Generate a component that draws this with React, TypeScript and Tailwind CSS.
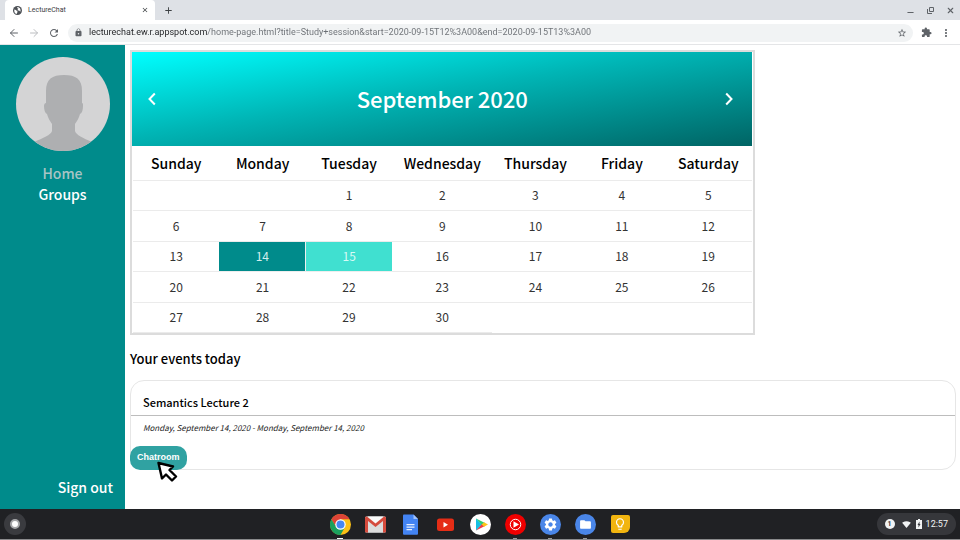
import type { ReactNode } from "react";
import { ArrowLeft, ArrowRight, Minus, X } from "lucide-react";
import {
  MdClose,
  MdAdd,
  MdRefresh,
  MdLock,
  MdStarBorder,
  MdExtension,
  MdMoreVert,
  MdSettings,
  MdFolder,
  MdSignalWifi4Bar,
  MdLightbulbOutline,
} from "react-icons/md";

const SANS = "font-['Noto_Sans_CJK_JP','Noto_Sans',sans-serif]";
const UI = "font-[Roboto,sans-serif]";

const DAYS = ["Sunday", "Monday", "Tuesday", "Wednesday", "Thursday", "Friday", "Saturday"];
const WEEKS: (number | null)[][] = [
  [null, null, 1, 2, 3, 4, 5],
  [6, 7, 8, 9, 10, 11, 12],
  [13, 14, 15, 16, 17, 18, 19],
  [20, 21, 22, 23, 24, 25, 26],
  [27, 28, 29, 30, null, null, null],
];

function TabStrip() {
  return (
    <div className="flex h-5 items-stretch bg-[#dee1e6] pl-[5px] text-[#3c4043]">
      <div className="flex w-[150px] items-center rounded-t-[4px] bg-white pr-[6px] pl-2">
        <svg viewBox="0 0 20 20" className="size-[9px]">
          <circle cx="10" cy="10" r="10" fill="#4d5156" />
          <path
            d="M3 8c3 0 4 2 6 3s1 3 0 4 0 3-1 3C4 17 2 13 3 8zM9 3c3-1 5 0 7 3 1 3 1 5 0 7-1-2-2-3-4-3s-3-2-1-3 0-2-2-2z"
            fill="#fff"
          />
        </svg>
        <span className="ml-[6px] flex-1 text-[7px] leading-none">LectureChat</span>
        <button aria-label="Close tab">
          <MdClose className="size-2" />
        </button>
      </div>
      <button aria-label="New tab" className="ml-2">
        <MdAdd className="size-[11px]" />
      </button>
      <div className="ml-auto flex items-center gap-[11px] pr-[5px] text-[#5f6368]">
        <button aria-label="Minimize" className="pt-[5px]">
          <Minus className="size-[9px]" strokeWidth={3} />
        </button>
        <button aria-label="Restore">
          <svg viewBox="0 0 9 9" className="size-[9px]" fill="none" stroke="currentColor">
            <path d="M3.5 1.5h4v4h-4zM1.5 3v4.5H6" />
          </svg>
        </button>
        <button aria-label="Close window">
          <X className="size-[9px]" strokeWidth={3} />
        </button>
      </div>
    </div>
  );
}

function Toolbar() {
  return (
    <div className="flex h-[25px] items-center border-b border-[#e4e5e7] bg-white pt-px pr-2 pl-2 text-[#5f6368]">
      <button aria-label="Back" className="mr-2">
        <ArrowLeft className="size-3" strokeWidth={2} />
      </button>
      <button aria-label="Forward" className="mr-2 text-[#bcbec1]">
        <ArrowRight className="size-3" strokeWidth={2} />
      </button>
      <button aria-label="Reload" className="mr-2">
        <MdRefresh className="size-3" />
      </button>
      <div className="flex h-[18px] flex-1 items-center rounded-full bg-[#f1f3f4] pr-[6px] pl-[6px]">
        <MdLock className="size-[9px]" />
        <input
          aria-label="Address"
          className="ml-[6px] flex-1 bg-[linear-gradient(90deg,#202124_118px,#6b6f74_118px)] bg-clip-text text-[9px] text-transparent outline-none"
          defaultValue="lecturechat.ew.r.appspot.com/home-page.html?title=Study+session&start=2020-09-15T12%3A00&end=2020-09-15T13%3A00"
        />
        <button aria-label="Bookmark">
          <MdStarBorder className="size-[10px]" />
        </button>
      </div>
      <button aria-label="Extensions" className="ml-2">
        <MdExtension className="size-[11px]" />
      </button>
      <button aria-label="Menu" className="ml-2">
        <MdMoreVert className="size-3" />
      </button>
    </div>
  );
}

function Avatar() {
  return (
    <svg viewBox="0 0 94 94" className="size-[94px] shrink-0 self-center" role="img" aria-label="Profile picture">
      <clipPath id="round">
        <circle cx="47" cy="47" r="47" />
      </clipPath>
      <g clipPath="url(#round)">
        <rect width="94" height="94" fill="#d4d4d5" />
        <path
          d="M30 42V34c0-12 6-16 18-16s18 4 18 16v12c1 0 1 1 1 3 0 4-1 7-3 8-1 4-3 7-5 10v7c1 4 8 7 17 11v12H18V85c9-4 17-7 18-11v-7c-2-3-4-6-5-10-2-1-3-4-3-8 0-2 1-3 2-3z"
          fill="#aeafb1"
        />
      </g>
    </svg>
  );
}

function Sidebar() {
  return (
    <nav className="flex w-[125px] shrink-0 flex-col bg-[#008b8b] px-3 pt-3 pb-[11px] text-sm leading-[21px] font-medium text-white">
      <Avatar />
      <div className="mt-3 flex flex-col items-center">
        <a href="#home" className="text-[#a9c4c4]">Home</a>
        <a href="#groups">Groups</a>
      </div>
      <a href="#sign-out" className="mt-auto self-end">Sign out</a>
    </nav>
  );
}

function dayClass(day: number | null, lastWeek: boolean) {
  if (day === 14) return "border-b border-[#eee] bg-[#008b8b] text-[#d5eeee]";
  if (day === 15) return "border-b border-l border-[#eee] bg-[#40e0d0] text-[#d8faf6]";
  if (lastWeek && day === null) return "";
  return "border-b border-[#ebebeb]";
}

function Chevron({ d }: { d: string }) {
  return (
    <svg viewBox="0 0 8 14" className="h-[14px] w-2" fill="none" stroke="currentColor" strokeWidth="2">
      <path d={d} />
    </svg>
  );
}

function Calendar() {
  return (
    <section className="box-content w-3/4 border-2 border-[#dcdcdc] pr-px">
      <header className="flex h-[94px] items-center justify-between bg-[linear-gradient(to_bottom_right,#00ffff,#00b5b5_45%,#006464)] pr-[19px] pl-4 text-white">
        <button aria-label="Previous month">
          <Chevron d="M6.800 1.500 1.500 7l5.300 5.500" />
        </button>
        <h1 className="pb-[3px] pl-1 text-[22px] leading-8 font-medium">September 2020</h1>
        <button aria-label="Next month">
          <Chevron d="M1.200 1.500 6.500 7l-5.300 5.500" />
        </button>
      </header>
      <div className="pl-px">
        <table className="h-[187px] w-full table-fixed border-collapse text-center text-[#333]">
          <thead>
            <tr className="h-[34px] text-black">
              {DAYS.map((d) => (
                <th
                  key={d}
                  className={
                    "border-b border-[#ebebeb] p-0 text-sm leading-5 font-medium " +
                    (d === "Wednesday" ? "w-[100px]" : "")
                  }
                >
                  {d}
                </th>
              ))}
            </tr>
          </thead>
          <tbody>
            {WEEKS.map((week, i) => (
              <tr key={i} className="h-[30px]">
                {week.map((day, j) => (
                  <td key={j} className={"p-0 text-xs leading-5 " + dayClass(day, i === WEEKS.length - 1)}>
                    {day}
                  </td>
                ))}
              </tr>
            ))}
          </tbody>
        </table>
      </div>
    </section>
  );
}

function Pointer() {
  return (
    <svg viewBox="0 0 22 22" className="pointer-events-none absolute top-[14px] left-[26px] size-[22px]">
      <path
        d="M2.500 3 17 6.500 13.500 10 20 16.500 16 20.500 10 14.500 6 18.500z"
        fill="#fff"
        stroke="#000"
        strokeWidth="2.400"
        strokeLinejoin="round"
      />
    </svg>
  );
}

function EventCard() {
  return (
    <article className="rounded-[14px] border border-[#e6e6e6]">
      <h3 className="border-b border-[#bdbdbd] px-3 pt-3 pb-1 text-[11px] leading-[18px] font-medium text-black">
        Semantics Lecture 2
      </h3>
      <p className="px-3 pt-1 text-[8px] leading-4 text-[#222] italic">
        Monday, September 14, 2020 - Monday, September 14, 2020
      </p>
      <div className="relative -mb-px -ml-px mt-[10px] flex">
        <button className="h-6 rounded-[10px] bg-[#30a2a2] px-[7px] font-['Liberation_Sans',Arial,sans-serif] text-[9px] font-bold text-white">
          Chatroom
        </button>
        <Pointer />
      </div>
    </article>
  );
}

function ChromeIcon() {
  return (
    <svg viewBox="0 0 42 42" className="size-[21px]">
      <circle cx="21" cy="21" r="21" fill="#fbc116" />
      <path d="M2.800 10.500A21 21 0 0 1 39.200 10.500H21L12 26z" fill="#de4437" />
      <path d="M2.800 10.500A21 21 0 0 0 21 42L30 26 12.500 26z" fill="#1ba05e" />
      <circle cx="21" cy="21" r="10.500" fill="#fff" />
      <circle cx="21" cy="21" r="8" fill="#4587f3" />
    </svg>
  );
}

function GmailIcon() {
  return (
    <svg viewBox="0 0 42 42" className="size-[21px]">
      <rect x="0" y="5" width="42" height="32" rx="3" fill="#f1f1f1" />
      <path d="M6 37V12l15 12 15-12v25z" fill="#dcdcdc" />
      <path d="M5 5h32L21 18z" fill="#fafafa" />
      <path d="M0 8c0-3 3-4 5-2l16 13L37 6c2-2 5-1 5 2v26c0 2-1 3-3 3h-3V14L21 26 6 14v23H3c-2 0-3-1-3-3z" fill="#d54b3d" />
    </svg>
  );
}

function DocsIcon() {
  return (
    <svg viewBox="0 0 42 42" className="size-[21px]">
      <path d="M8 1h19l9 9v29c0 1.500-1 2.500-2.500 2.500h-25C7 41.500 6 40.500 6 39V3.500C6 2 7 1 8 1z" fill="#4384f3" />
      <path d="M27 1v9h9z" fill="#a3c3fb" />
      <path d="M13 21h16M13 26h16M13 31h11" stroke="#e8f0fe" strokeWidth="2.500" />
    </svg>
  );
}

function YoutubeIcon() {
  return (
    <svg viewBox="0 0 42 42" className="size-[21px]">
      <rect x="4" y="9" width="34" height="25" rx="5" fill="#e52d16" />
      <path d="M17 16v11l9-5.500z" fill="#fff" />
    </svg>
  );
}

function PlayIcon() {
  return (
    <svg viewBox="0 0 42 42" className="size-[21px]">
      <circle cx="21" cy="21" r="21" fill="#fff" />
      <path d="M12 9v24l12-12z" fill="#15bfe4" />
      <path d="M12 9l18 9-6 4z" fill="#2fce74" />
      <path d="M12 33l18-9-6-4z" fill="#ef3e4a" />
      <path d="M28 16.500l8 4.500-8 4.500-4.500-4.500z" fill="#fcc419" />
    </svg>
  );
}

function MusicIcon() {
  return (
    <svg viewBox="0 0 42 42" className="size-[21px]">
      <circle cx="21" cy="21" r="21" fill="#f00000" />
      <circle cx="21" cy="21" r="10.500" fill="none" stroke="#fff" strokeWidth="2" />
      <path d="M17 14.500v13L28 21z" fill="#fff" />
    </svg>
  );
}

function Disc({ children }: { children: ReactNode }) {
  return (
    <span className="flex size-[21px] items-center justify-center rounded-full bg-[#4a86e8] text-white">{children}</span>
  );
}

function KeepIcon() {
  return (
    <span className="flex h-[18px] w-[19px] items-center justify-center rounded-[2px] rounded-br-[6px] bg-[#f2b50f] text-white">
      <MdLightbulbOutline className="size-[14px]" />
    </span>
  );
}

const APPS: { name: string; icon: ReactNode; open?: boolean }[] = [
  { name: "Chrome", icon: <ChromeIcon />, open: true },
  { name: "Gmail", icon: <GmailIcon /> },
  { name: "Docs", icon: <DocsIcon /> },
  { name: "YouTube", icon: <YoutubeIcon /> },
  { name: "Play Store", icon: <PlayIcon /> },
  { name: "YouTube Music", icon: <MusicIcon />, open: true },
  { name: "Settings", icon: <Disc><MdSettings className="size-[15px]" /></Disc>, open: true },
  { name: "Files", icon: <Disc><MdFolder className="size-[13px]" /></Disc>, open: true },
  { name: "Keep", icon: <KeepIcon /> },
];

function Shelf() {
  return (
    <footer className="flex h-[31px] shrink-0 items-center border-b border-[#8a8a8c] bg-[#202124]">
      <div className="flex flex-1 pl-1">
        <button aria-label="Launcher" className="flex size-[22px] items-center justify-center rounded-full bg-[#3a3b3f]">
          <span className="size-[10px] rounded-full border-2 border-[#a5a6a8] bg-white" />
        </button>
      </div>
      <div className="flex gap-[14px]">
        {APPS.map((app) => (
          <button key={app.name} aria-label={app.name} className="relative flex size-[21px] items-center justify-center">
            {app.icon}
            {app.open && (
              <span
                className={
                  "absolute -bottom-1 h-px " + (app.name === "Chrome" ? "w-[6px] bg-white" : "w-1 bg-[#9a9b9d]")
                }
              />
            )}
          </button>
        ))}
      </div>
      <div className="flex flex-1 justify-end pr-1">
        <button className="flex h-[22px] items-center rounded-full bg-[#36373b] px-2 text-[#f1f3f4]">
          <span className="flex size-[10px] items-center justify-center rounded-full bg-[#f1f3f4] text-[7px] font-bold text-[#36373b]">
            1
          </span>
          <MdSignalWifi4Bar className="ml-[7px] size-[9px]" />
          <svg viewBox="0 0 12 20" className="ml-[5px] h-[10px] w-[6px]">
            <path d="M4 0h4v2h4v18H0V2h4z" fill="currentColor" />
            <path d="M7 5 3 12h2v5l4-7H7z" fill="#36373b" />
          </svg>
          <span className="ml-1 text-[9px] leading-none">12:57</span>
        </button>
      </div>
    </footer>
  );
}

export default function App() {
  return (
    <div className={"flex h-screen flex-col overflow-hidden bg-white " + UI}>
      <TabStrip />
      <Toolbar />
      <div className={"flex min-h-0 flex-1 " + SANS}>
        <Sidebar />
        <main className="min-w-0 flex-1 pt-[5px] pr-1 pl-[5px]">
          <Calendar />
          <h2 className="mt-3 mb-[9px] text-[13px] leading-6 font-medium text-black">Your events today</h2>
          <EventCard />
        </main>
      </div>
      <Shelf />
    </div>
  );
}
